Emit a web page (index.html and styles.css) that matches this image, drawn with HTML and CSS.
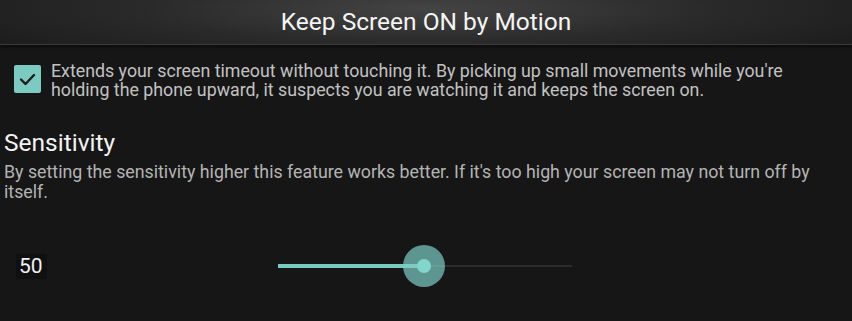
FILE: index.html
```html
<!DOCTYPE html>
<html lang="en">
  <head>
    <meta charset="utf-8" />
    <title>Keep Screen ON by Motion</title>
    <link rel="stylesheet" href="styles.css">
  </head>
  <body>
    <div class="wrap">
      <header class="title_bar">
        <h1 class="title">Keep Screen ON by Motion</h1>
      </header>

      <div class="option">
        <span class="check" role="checkbox" aria-checked="true">
          <svg width="17" height="13" viewBox="0 0 17 13">
            <path d="M2 6.5 L6.5 11 L15 2" fill="none" stroke="#1c1c1c" stroke-width="2.4" stroke-linecap="round" stroke-linejoin="round" />
          </svg>
        </span>
        <p class="option_txt">Extends your screen timeout without touching it. By picking up small movements while you're holding the phone upward, it suspects you are watching it and keeps the screen on.</p>
      </div>

      <div class="section">
        <h2 class="section_title">Sensitivity</h2>
        <p class="section_txt">By setting the sensitivity higher this feature works better. If it's too high your screen may not turn off by itself.</p>
      </div>

      <div class="slider_row">
        <span class="value">50</span>
        <div class="slider">
          <div class="track_on" style="width: 146px"></div>
          <div class="thumb"><span class="dot"></span></div>
          <div class="track_off"></div>
        </div>
      </div>
    </div>
  </body>
</html>
```

FILE: styles.css
```css
* {
  margin: 0;
  padding: 0;
  box-sizing: border-box;
}

body {
  width: 852px;
  height: 321px;
  overflow: hidden;
  background-color: #161616;
  font-family: Roboto, 'Noto Sans', sans-serif;
}

.title_bar {
  height: 45px;
  display: flex;
  align-items: center;
  justify-content: center;
  background: radial-gradient(ellipse 60% 140% at 50% 20%, #444 0, #2a2a2a 55%, #1d1d1d 100%);
  border-bottom: 1px solid #3c3c3c;
  box-shadow: 0 2px 3px rgba(0, 0, 0, 0.5);
}

.title {
  font-size: 24.5px;
  font-weight: 400;
  color: #f4f4f4;
  padding-bottom: 2px;
}

.option {
  display: flex;
  align-items: flex-start;
  padding: 16px 0 0 14px;
}

.check {
  flex: none;
  width: 27px;
  height: 28px;
  margin-top: 4px;
  border-radius: 2px;
  background-color: #7ccbc3;
  display: flex;
  align-items: center;
  justify-content: center;
}

.option_txt {
  margin-left: 10px;
  width: 750px;
  font-size: 17.8px;
  line-height: 19px;
  color: #c2c2c2;
}

.section {
  padding: 29px 0 0 4px;
}

.section_title {
  font-size: 24.5px;
  font-weight: 400;
  line-height: 30px;
  color: #f2f2f2;
}

.section_txt {
  margin-top: 4px;
  width: 830px;
  font-size: 17.8px;
  line-height: 20px;
  color: #b4b4b4;
}

.slider_row {
  display: flex;
  align-items: center;
  padding-top: 42px;
}

.value {
  margin-left: 16px;
  width: 31px;
  height: 25px;
  line-height: 25px;
  padding-left: 3px;
  font-size: 21px;
  color: #f0f0f0;
  background-color: #101010;
}

.slider {
  display: flex;
  align-items: center;
  margin-left: 231px;
  width: 294px;
  height: 44px;
}

.track_on {
  height: 4px;
  background-color: #78cbc1;
}

.thumb {
  flex: none;
  width: 42px;
  height: 42px;
  margin: 0 -21px;
  border-radius: 50%;
  background-color: rgba(124, 205, 196, 0.7);
  display: flex;
  align-items: center;
  justify-content: center;
  position: relative;
  z-index: 1;
}

.thumb .dot {
  width: 14px;
  height: 14px;
  border-radius: 50%;
  background-color: #82d6cc;
}

.track_off {
  flex: 1;
  height: 2px;
  background-color: #2d2d2d;
}
```
